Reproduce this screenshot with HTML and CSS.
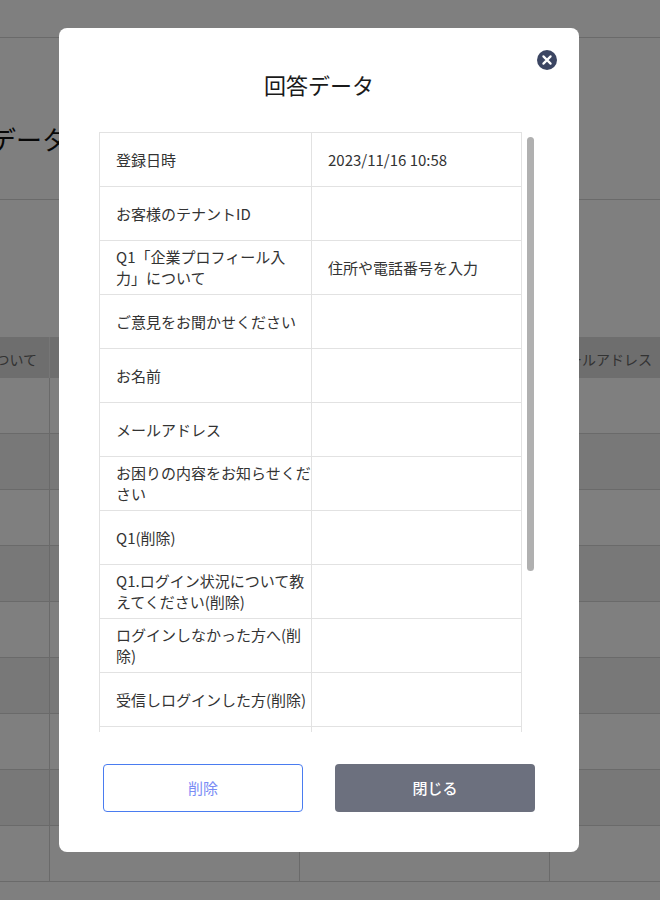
FILE: index.html
```html
<!DOCTYPE html>
<html lang="ja">
<head>
<meta charset="utf-8">
<title>回答データ</title>
<link rel="stylesheet" href="styles.css">
</head>
<body>
<div class="page">
  <div class="topbar"></div>
  <div class="heading"><h1 class="page-title">回答データ</h1></div>
  <div class="bg-table">
    <div class="bg-row bg-head">
      <div class="bg-cell bg-cell-end">について</div>
      <div class="bg-cell"></div>
      <div class="bg-cell"></div>
      <div class="bg-cell bg-cell-mail">メールアドレス</div>
    </div>
    <div class="bg-row"><div class="bg-cell"></div><div class="bg-cell"></div><div class="bg-cell"></div><div class="bg-cell"></div></div>
    <div class="bg-row bg-alt"><div class="bg-cell"></div><div class="bg-cell"></div><div class="bg-cell"></div><div class="bg-cell"></div></div>
    <div class="bg-row"><div class="bg-cell"></div><div class="bg-cell"></div><div class="bg-cell"></div><div class="bg-cell"></div></div>
    <div class="bg-row bg-alt"><div class="bg-cell"></div><div class="bg-cell"></div><div class="bg-cell"></div><div class="bg-cell"></div></div>
    <div class="bg-row"><div class="bg-cell"></div><div class="bg-cell"></div><div class="bg-cell"></div><div class="bg-cell"></div></div>
    <div class="bg-row bg-alt"><div class="bg-cell"></div><div class="bg-cell"></div><div class="bg-cell"></div><div class="bg-cell"></div></div>
    <div class="bg-row"><div class="bg-cell"></div><div class="bg-cell"></div><div class="bg-cell"></div><div class="bg-cell"></div></div>
    <div class="bg-row bg-alt"><div class="bg-cell"></div><div class="bg-cell"></div><div class="bg-cell"></div><div class="bg-cell"></div></div>
    <div class="bg-row"><div class="bg-cell"></div><div class="bg-cell"></div><div class="bg-cell"></div><div class="bg-cell"></div></div>
  </div>
</div>
<div class="overlay">
  <div class="modal">
    <button class="close" type="button" aria-label="閉じる">
      <svg class="close-icon" viewBox="0 0 20 20" width="20" height="20">
        <circle cx="10" cy="10" r="10" fill="#3b4562"/>
        <path d="M6.4 6.4L13.6 13.6M13.6 6.4L6.4 13.6" stroke="#fff" stroke-width="2.2" stroke-linecap="round"/>
      </svg>
    </button>
    <h2 class="modal-title">回答データ</h2>
    <div class="scroller">
      <table class="answers">
        <tbody>
          <tr><th>登録日時</th><td>2023/11/16 10:58</td></tr>
          <tr><th>お客様のテナントID</th><td></td></tr>
          <tr><th>Q1「企業プロフィール入<br>力」について</th><td>住所や電話番号を入力</td></tr>
          <tr><th>ご意見をお聞かせください</th><td></td></tr>
          <tr><th>お名前</th><td></td></tr>
          <tr><th>メールアドレス</th><td></td></tr>
          <tr><th>お困りの内容をお知らせください</th><td></td></tr>
          <tr><th>Q1(削除)</th><td></td></tr>
          <tr><th>Q1.ログイン状況について教えてください(削除)</th><td></td></tr>
          <tr><th>ログインしなかった方へ(削除)</th><td></td></tr>
          <tr><th>受信しログインした方(削除)</th><td></td></tr>
          <tr><th></th><td></td></tr>
        </tbody>
      </table>
      <div class="scroll-thumb"></div>
    </div>
    <div class="actions">
      <button class="btn btn-outline" type="button">削除</button>
      <button class="btn btn-solid" type="button">閉じる</button>
    </div>
  </div>
</div>
</body>
</html>
```
FILE: styles.css
```css
* { box-sizing: border-box; }
html, body { margin: 0; height: 100%; overflow: hidden; }
body {
  font-family: "Noto Sans CJK JP", "Noto Sans", sans-serif;
  color: #333;
  background: #fff;
}
.page { height: 900px; overflow: hidden; }
.topbar { height: 38px; border-bottom: 1px solid #d4d4d4; }
.heading {
  height: 162px;
  border-bottom: 1px solid #d4d4d4;
  padding-top: 82px;
  margin-bottom: 137px;
}
.page-title {
  margin: 0 0 0 -62px;
  font-size: 26px;
  font-weight: 400;
  line-height: 38px;
  color: #111;
  white-space: nowrap;
}
.bg-table { width: 1000px; margin-left: -200px; }
.bg-row { display: flex; height: 56px; border-bottom: 1px solid #d4d4d4; }
.bg-alt { background: #f0f0f0; }
.bg-head { height: 41px; background: #dcdcdc; border-bottom: 0; font-size: 14px; color: #666; }
.bg-cell {
  width: 250px;
  border-right: 1px solid #d4d4d4;
  white-space: nowrap;
}
.bg-head .bg-cell { line-height: 44px; border-right-color: #ececec; }
.bg-cell-end { display: flex; justify-content: flex-end; padding-right: 12px; }
.bg-cell-mail { padding-left: 4px; }
.overlay {
  position: fixed;
  inset: 0;
  background: rgba(0, 0, 0, 0.5);
  padding: 28px 0 0 59px;
}
.modal {
  position: relative;
  width: 520px;
  height: 824px;
  background: #fff;
  border-radius: 8px;
  padding: 0 40px;
}
.close {
  position: absolute;
  top: 22px;
  right: 22px;
  width: 20px;
  height: 20px;
  padding: 0;
  border: 0;
  background: none;
  display: block;
}
.close-icon { display: block; }
.modal-title {
  margin: 0;
  padding-top: 40px;
  height: 104px;
  font-size: 22px;
  font-weight: 400;
  line-height: 32px;
  text-align: center;
  color: #1a1a1a;
}
.scroller {
  position: relative;
  width: 436px;
  height: 600px;
  overflow: hidden;
}
.scroll-thumb {
  position: absolute;
  top: 5px;
  left: 428px;
  width: 7px;
  height: 434px;
  background: #b0b0b0;
  border-radius: 4px;
}
.answers {
  width: 423px;
  table-layout: fixed;
  border-collapse: collapse;
  font-size: 15px;
  line-height: 21px;
}
.answers th, .answers td {
  height: 54px;
  border: 1px solid #e2e2e2;
  padding: 0 0 1px 16px;
  font-weight: 400;
  text-align: left;
  vertical-align: middle;
  color: #333;
}
.answers th { width: 212px; }
.actions {
  display: flex;
  gap: 32px;
  padding: 32px 4px 0;
}
.btn {
  width: 200px;
  height: 48px;
  padding: 0 0 2px;
  border-radius: 4px;
  font-family: inherit;
  font-size: 15px;
}
.btn-outline { background: #fff; border: 1px solid #4a7cf0; color: #7a8cf5; }
.btn-solid { background: #6c707e; border: 0; color: #fff; font-weight: 500; }
```
